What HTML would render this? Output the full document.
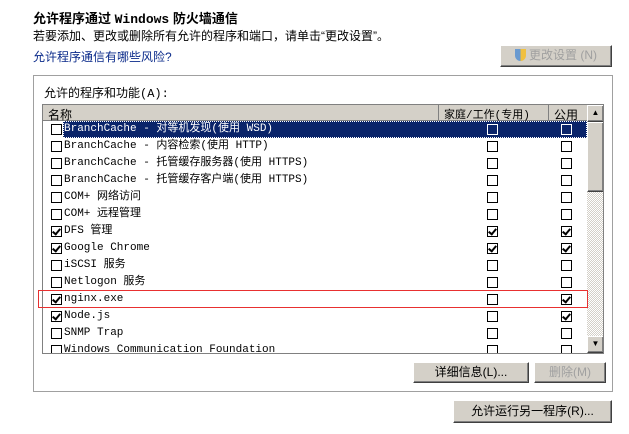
<!DOCTYPE html>
<html><head><meta charset="utf-8"><style>
*{margin:0;padding:0;box-sizing:border-box}
body{width:629px;height:434px;background:#fff;position:relative;overflow:hidden;font-family:"Liberation Sans","WenQuanYi Zen Hei","Noto Sans CJK SC",sans-serif;font-size:12px;color:#000}
.a{position:absolute;white-space:nowrap}
.btn{position:absolute;background:#d4d0c8;border:1px solid;border-color:#fff #404040 #404040 #fff;box-shadow:inset -1px -1px 0 #808080;text-align:center;font-size:12px;line-height:19px}
.mono{font-family:"Liberation Mono","WenQuanYi Zen Hei",monospace;font-size:11px}
.cb{position:absolute;width:11px;height:11px;border:1px solid #000;background:#fff}
.cb.w{border-color:#fff;background:transparent}
.cb.c::after{content:"";position:absolute;left:2px;top:0px;width:3px;height:6px;border:solid #000;border-width:0 2px 2px 0;transform:rotate(40deg)}
.row{position:absolute;left:43px;width:544px;height:17px}
.row .t{position:absolute;left:21px;top:2px;line-height:13px}
</style></head><body>
<div class="a" style="left:33px;top:8px;font-weight:bold;font-size:13px">允许程序通过 <span style="font-family:'Liberation Mono',monospace">Windows</span> 防火墙通信</div>
<div class="a" style="left:33px;top:27px">若要添加、更改或删除所有允许的程序和端口，请单击“更改设置”。</div>
<div class="a" style="left:33px;top:48px;color:#0a2a8a">允许程序通信有哪些风险?</div>
<div class="btn" style="left:500px;top:45px;width:112px;height:22px;color:#a0a0a0"><span style="display:inline-block;width:11px;height:12px;border-radius:0 0 6px 6px;background:linear-gradient(90deg,#6a9ad0 50%,#f0c040 50%);vertical-align:-2px;margin-right:3px"></span>更改设置 (N)</div>
<div class="a" style="left:33px;top:75px;width:580px;height:317px;border:1px solid #a0a0a0"></div>
<div class="a mono" style="left:44px;top:84px;font-size:12px">允许的程序和功能(A):</div>
<div class="a" style="left:42px;top:104px;width:562px;height:250px;border:1px solid #808080;overflow:hidden;background:#fff">
 <div class="a" style="left:0;top:0;width:544px;height:16px;background:#d4d0c8;border-bottom:1px solid #808080"></div>
 <div class="a mono" style="left:5px;top:1px;font-size:12px">名称</div>
 <div class="a" style="left:395px;top:0;width:1px;height:16px;background:#fff;border-left:1px solid #808080"></div>
 <div class="a mono" style="left:401px;top:1px;font-size:11px">家庭/工作(专用)</div>
 <div class="a" style="left:505px;top:0;width:1px;height:16px;background:#fff;border-left:1px solid #808080"></div>
 <div class="a mono" style="left:511px;top:1px;font-size:12px">公用</div>
 <div class="a" style="left:544px;top:0;width:17px;height:248px;background:repeating-conic-gradient(#d4d0c8 0 25%,#fff 0 50%) 0 0/2px 2px"></div>
 <div class="btn" style="left:544px;top:0;width:17px;height:17px;font-size:8px;line-height:14px">▲</div>
 <div class="btn" style="left:544px;top:17px;width:17px;height:70px"></div>
 <div class="btn" style="left:544px;top:231px;width:17px;height:17px;font-size:8px;line-height:14px">▼</div>
</div>
<div class="a" style="left:63px;top:121px;width:524px;height:17px;background:#0a246a;outline:1px dotted #fff;outline-offset:-1px"></div>
<div id="rows"></div>
<div class="a" style="left:38px;top:290px;width:550px;height:18px;border:1px solid #e83030"></div>
<div class="btn" style="left:413px;top:362px;width:116px;height:21px">详细信息(L)...</div>
<div class="btn" style="left:534px;top:362px;width:72px;height:21px;color:#a0a0a0">删除(M)</div>
<div class="btn" style="left:453px;top:400px;width:159px;height:23px;line-height:21px">允许运行另一程序(R)...</div>
<script>
var d=[["BranchCache - 对等机发现(使用 WSD)",0,0,0],["BranchCache - 内容检索(使用 HTTP)",0,0,0],["BranchCache - 托管缓存服务器(使用 HTTPS)",0,0,0],["BranchCache - 托管缓存客户端(使用 HTTPS)",0,0,0],["COM+ 网络访问",0,0,0],["COM+ 远程管理",0,0,0],["DFS 管理",1,1,1],["Google Chrome",1,1,1],["iSCSI 服务",0,0,0],["Netlogon 服务",0,0,0],["nginx.exe",1,0,1],["Node.js",1,0,1],["SNMP Trap",0,0,0],["Windows Communication Foundation",0,0,0]];
var h="";d.forEach(function(r,i){var y=121+i*17;var sel=i==0;var hh=i==13?(354-y-1):17;var w=sel?' w':'';
h+='<div class="row mono" style="top:'+y+'px;height:'+hh+'px;overflow:hidden;'+(sel?'color:#fff;':'')+'">'+
'<div class="cb'+(r[1]?' c':'')+'" style="left:8px;top:3px"></div><div class="t">'+r[0]+'</div>'+
'<div class="cb'+w+(r[2]?' c':'')+'" style="left:444px;top:3px"></div>'+
'<div class="cb'+w+(r[3]?' c':'')+'" style="left:518px;top:3px"></div></div>';});
document.getElementById("rows").innerHTML=h;
</script>
</body></html>
